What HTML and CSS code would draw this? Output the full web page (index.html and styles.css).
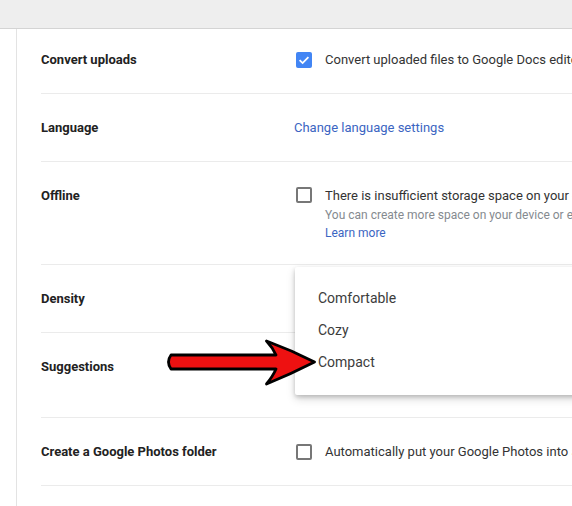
FILE: index.html
```html
<!DOCTYPE html>
<html>
<head>
<meta charset="utf-8">
<link rel="stylesheet" href="styles.css">
</head>
<body>
<div class="topbar"></div>
<div class="page">
  <div class="gutter"></div>
  <div class="content">
    <div class="row first">
      <div class="label">Convert uploads</div>
      <div class="control">
        <span class="checkbox checked">
          <svg width="16" height="16" viewBox="0 0 16 16"><path d="M3.6 8.2 L6.6 11.1 L12.4 5.1" fill="none" stroke="#fff" stroke-width="1.8"/></svg>
        </span>
        <span class="text">Convert uploaded files to Google Docs editor format</span>
      </div>
    </div>
    <div class="row">
      <div class="label">Language</div>
      <div class="control link-only"><span class="link">Change language settings</span></div>
    </div>
    <div class="row offline">
      <div class="label">Offline</div>
      <div class="control top">
        <span class="checkbox"></span>
        <div class="stack">
          <div class="text">There is insufficient storage space on your device</div>
          <div class="sub">You can create more space on your device or enable offline later</div>
          <div class="sub link">Learn more</div>
        </div>
      </div>
    </div>
    <div class="row">
      <div class="label">Density</div>
    </div>
    <div class="row tall">
      <div class="label">Suggestions</div>
    </div>
    <div class="row">
      <div class="label">Create a Google Photos folder</div>
      <div class="control">
        <span class="checkbox"></span>
        <span class="text">Automatically put your Google Photos into a folder in My Drive</span>
      </div>
    </div>
    <div class="row"></div>
  </div>
</div>
<div class="menu">
  <div class="item">Comfortable</div>
  <div class="item">Cozy</div>
  <div class="item">Compact</div>
</div>
<svg class="arrow" width="160" height="52" viewBox="160 336 160 52">
  <path d="M171 355 L276 355 Q273 348 266.5 341 Q291 350 314.5 362 Q291 374 266.5 384 Q273 376 276 369 L171 369 Q166 362 171 355 Z" fill="#ee1111" stroke="#000" stroke-width="2.8" stroke-linejoin="round"/>
</svg>
</body>
</html>
```
FILE: styles.css
```css
html, body {
  margin: 0;
  padding: 0;
  background: #fff;
  overflow: hidden;
  width: 572px;
  height: 506px;
}
body {
  font-family: Roboto, "Liberation Sans", Arial, sans-serif;
  color: #222;
  position: relative;
}
.topbar {
  height: 28px;
  background: #eeeeee;
  border-bottom: 1px solid #d4d4d4;
}
.page {
  display: flex;
}
.gutter {
  width: 16px;
  flex: none;
  border-right: 1px solid #e3e3e3;
  min-height: 480px;
}
.content {
  flex: 1;
  padding-left: 24px;
}
.row {
  display: flex;
  align-items: flex-start;
  padding: 24px 0 23px;
  border-bottom: 1px solid #ebebeb;
  line-height: 20px;
  white-space: nowrap;
}
.row.first {
  padding-top: 21px;
}
.row.offline {
  padding-bottom: 22px;
}
.row.tall {
  padding-bottom: 40px;
}
.label {
  width: 255px;
  flex: none;
  font-size: 13px;
  font-weight: 700;
  color: #222;
}
.control {
  display: flex;
  align-items: center;
  gap: 13px;
}
.control.top {
  align-items: flex-start;
}
.control.top .checkbox {
  margin-top: 1px;
}
.link-only {
  margin-left: -2px;
}
.checkbox {
  width: 12px;
  height: 12px;
  border: 2px solid #777;
  border-radius: 2px;
  flex: none;
  display: block;
}
.checkbox.checked {
  width: 16px;
  height: 16px;
  border: none;
  background: #4285f4;
}
.checkbox svg {
  display: block;
}
.text {
  font-size: 13px;
  color: #333;
}
.stack {
  line-height: 18px;
}
.stack .text {
  line-height: 20px;
}
.sub {
  font-size: 12px;
  color: #858a8f;
}
.link {
  font-size: 13px;
  color: #3b65c2;
}
.sub.link {
  font-size: 12px;
}
.menu {
  position: absolute;
  left: 295px;
  top: 267px;
  width: 300px;
  height: 128px;
  box-sizing: border-box;
  padding-top: 15px;
  background: #fff;
  box-shadow: 0 2px 4px rgba(0,0,0,0.18), 0 4px 10px rgba(0,0,0,0.15);
  border-radius: 2px;
}
.item {
  height: 32px;
  line-height: 32px;
  padding-left: 23px;
  font-size: 14px;
  color: #3c3c3c;
}
.arrow {
  position: absolute;
  left: 160px;
  top: 336px;
}
```
